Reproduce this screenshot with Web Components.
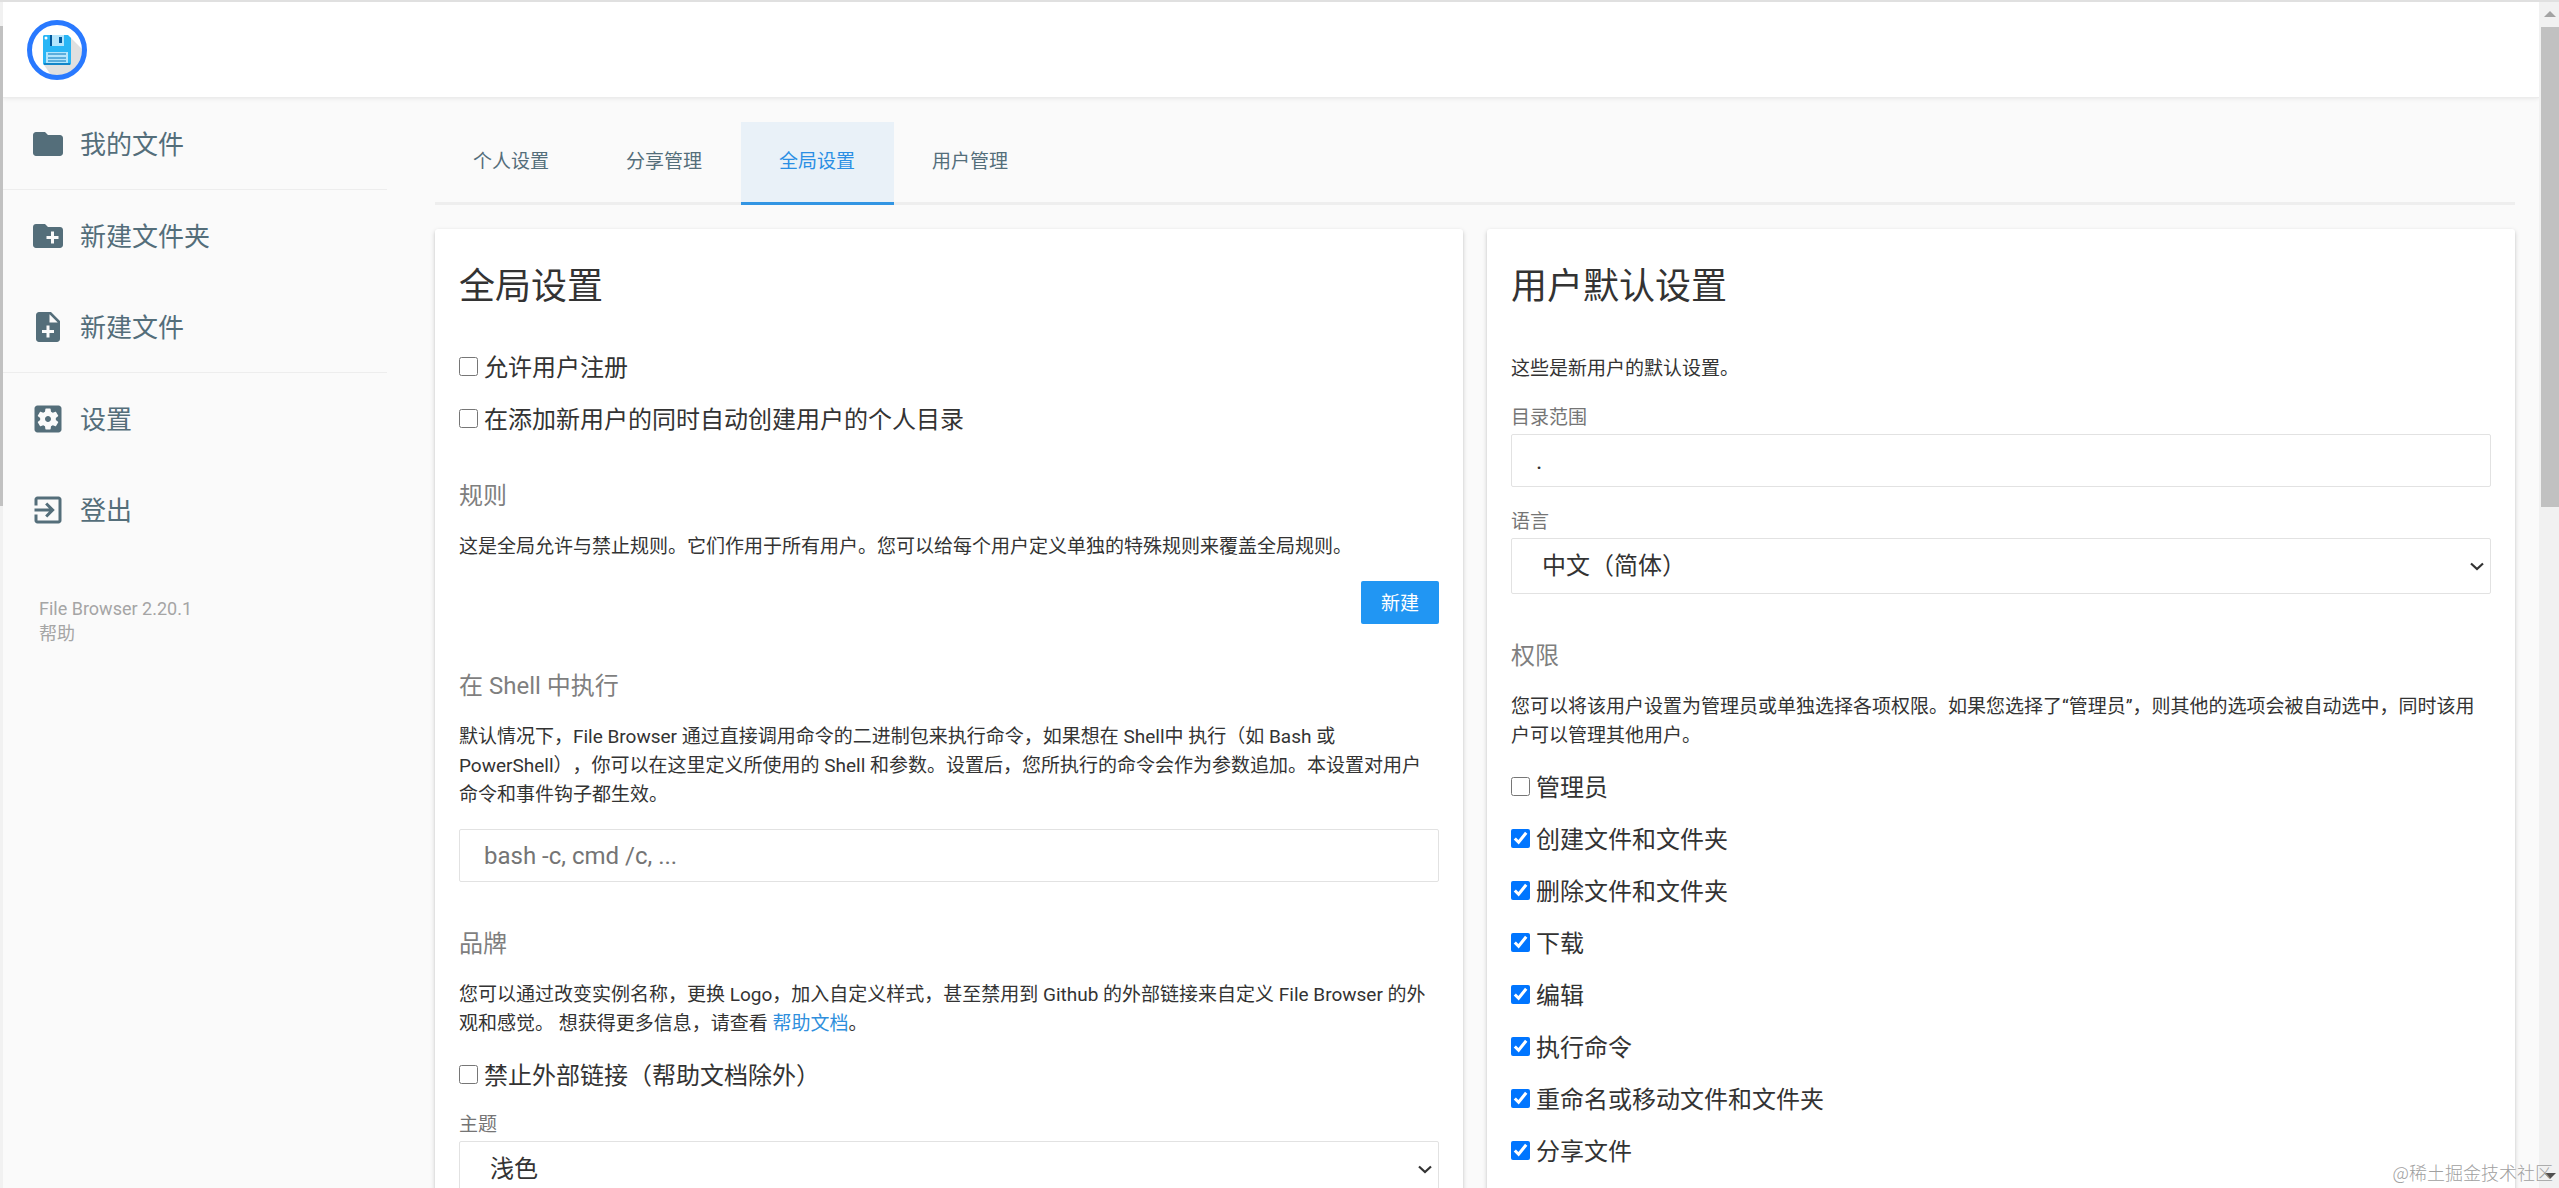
<!DOCTYPE html>
<html lang="zh-CN">
<head>
<meta charset="utf-8">
<title>全局设置 - File Browser</title>
<style>
html, body {
    height: 100%;
}

body {
    margin: 0;
    overflow: hidden;
    background: #fafafa;
    color: #333;
    font-family: Roboto, "Noto Sans CJK SC", sans-serif;
    font-size: 19px;
    text-spacing-trim: space-all;
}

settings-card p a {
    color: #2f8fdd;
    text-decoration: none;
}
</style>
</head>
<body>

<app-shell>
    <app-header slot="header"></app-header>

    <side-nav slot="nav">
        <nav-item icon="folder">我的文件</nav-item>
        <nav-item icon="create_new_folder" divided>新建文件夹</nav-item>
        <nav-item icon="note_add">新建文件</nav-item>
        <nav-item icon="settings" divided>设置</nav-item>
        <nav-item icon="logout">登出</nav-item>
        <span slot="credits">File Browser 2.20.1</span>
        <help-link slot="credits">帮助</help-link>
    </side-nav>

    <tab-bar>
        <tab-item>个人设置</tab-item>
        <tab-item>分享管理</tab-item>
        <tab-item active>全局设置</tab-item>
        <tab-item>用户管理</tab-item>
    </tab-bar>

    <card-row>
        <settings-card heading="全局设置">
            <check-row>允许用户注册</check-row>
            <check-row>在添加新用户的同时自动创建用户的个人目录</check-row>

            <h3>规则</h3>
            <p>这是全局允许与禁止规则。它们作用于所有用户。您可以给每个用户定义单独的特殊规则来覆盖全局规则。</p>
            <flat-button>新建</flat-button>

            <h3>在 Shell 中执行</h3>
            <p>默认情况下，File Browser 通过直接调用命令的二进制包来执行命令，如果想在 Shell中 执行（如 Bash 或 PowerShell），你可以在这里定义所使用的 Shell 和参数。设置后，您所执行的命令会作为参数追加。本设置对用户命令和事件钩子都生效。</p>
            <text-field placeholder="bash -c, cmd /c, ..."></text-field>

            <h3>品牌</h3>
            <p>您可以通过改变实例名称，更换 Logo，加入自定义样式，甚至禁用到 Github 的外部链接来自定义 File Browser 的外观和感觉。 想获得更多信息，请查看 <a href="#docs">帮助文档</a>。</p>
            <check-row>禁止外部链接（帮助文档除外）</check-row>
            <select-field label="主题" value="浅色"></select-field>
        </settings-card>

        <settings-card heading="用户默认设置">
            <p>这些是新用户的默认设置。</p>
            <text-field label="目录范围" value="."></text-field>
            <select-field label="语言" value="中文（简体）"></select-field>

            <h3>权限</h3>
            <p>您可以将该用户设置为管理员或单独选择各项权限。如果您选择了“管理员”，则其他的选项会被自动选中，同时该用户可以管理其他用户。</p>
            <check-row>管理员</check-row>
            <check-row checked>创建文件和文件夹</check-row>
            <check-row checked>删除文件和文件夹</check-row>
            <check-row checked>下载</check-row>
            <check-row checked>编辑</check-row>
            <check-row checked>执行命令</check-row>
            <check-row checked>重命名或移动文件和文件夹</check-row>
            <check-row checked>分享文件</check-row>
        </settings-card>
    </card-row>

    <page-mark slot="mark">@稀土掘金技术社区</page-mark>
</app-shell>

<script>
(function() {
    const icons = {
        folder: 'M10 4H4c-1.1 0-1.99.9-1.99 2L2 18c0 1.1.9 2 2 2h16c1.1 0 2-.9 2-2V8c0-1.1-.9-2-2-2h-8l-2-2z',
        create_new_folder: 'M20 6h-8l-2-2H4c-1.11 0-1.99.89-1.99 2L2 18c0 1.11.89 2 2 2h16c1.11 0 2-.89 2-2V8c0-1.11-.89-2-2-2zm-1 8h-3v3h-2v-3h-3v-2h3V9h2v3h3v2z',
        note_add: 'M14 2H6c-1.1 0-1.99.9-1.99 2L4 20c0 1.1.89 2 1.99 2H18c1.1 0 2-.9 2-2V8l-6-6zm2 14h-3v3h-2v-3H8v-2h3v-3h2v3h3v2zm-3-7V3.5L18.5 9H13z',
        settings: 'M12 10c-1.1 0-2 .9-2 2s.9 2 2 2 2-.9 2-2-.9-2-2-2zm7-7H5c-1.11 0-2 .9-2 2v14c0 1.1.89 2 2 2h14c1.11 0 2-.9 2-2V5c0-1.1-.89-2-2-2zm-1.75 9c0 .23-.02.46-.05.68l1.48 1.16c.13.11.17.3.08.45l-1.4 2.42c-.09.15-.27.21-.43.15l-1.74-.7c-.36.28-.76.51-1.18.69l-.26 1.85c-.03.17-.18.3-.35.3h-2.8c-.17 0-.32-.13-.35-.29l-.26-1.85c-.43-.18-.82-.41-1.18-.69l-1.74.7c-.16.06-.34 0-.43-.15l-1.4-2.42c-.09-.15-.05-.34.08-.45l1.48-1.16c-.03-.23-.05-.46-.05-.69 0-.23.02-.46.05-.68l-1.48-1.16c-.13-.11-.17-.3-.08-.45l1.4-2.42c.09-.15.27-.21.43-.15l1.74.7c.36-.28.76-.51 1.18-.69l.26-1.85c.03-.17.18-.3.35-.3h2.8c.17 0 .32.13.35.29l.26 1.85c.43.18.82.41 1.18.69l1.74-.7c.16-.06.34 0 .43.15l1.4 2.42c.09.15.05.34-.08.45l-1.48 1.16c.03.23.05.46.05.69z',
        logout: 'M10.09 15.59L11.5 17l5-5-5-5-1.41 1.41L12.67 11H3v2h9.67l-2.58 2.59zM19 3H5c-1.11 0-2 .9-2 2v4h2V5h14v14H5v-4H3v4c0 1.1.89 2 2 2h14c1.1 0 2-.9 2-2V5c0-1.1-.9-2-2-2z'
    };

    /**
     * Register an element whose shadow root is cloned from the given markup.
     *
     * @param name
     * @param html
     * @param setup called with the element once it is connected
     */
    function define(name, html, setup) {
        const template = document.createElement('template');
        template.innerHTML = html;

        customElements.define(name, class extends HTMLElement {
            constructor() {
                super();
                this.attachShadow({mode: 'open'});
                this.shadowRoot.appendChild(template.content.cloneNode(true));
            }

            connectedCallback() {
                if (setup) {
                    setup(this, this.shadowRoot);
                }
            }
        });
    }

    /*
     *     Page frame
     * ------------------
     */
    define('app-shell', `
<style>
:host {
    display: grid;
    grid-template-columns: 3px minmax(0, 1fr) 20px;
    height: 100vh;
    box-sizing: border-box;
    border-top: 2px solid #e0e0e0;
    overflow: hidden;
}
.rail {
    background: #f1f1f1;
    display: flex;
    flex-direction: column;
}
.left {
    padding-top: 24px;
}
.right {
    padding: 9px 0 9px 2px;
    align-items: center;
    justify-content: space-between;
}
.right .thumb {
    margin: 10px 0 auto;
}
.thumb {
    width: 100%;
    height: 480px;
    background: #c1c1c1;
}
.rail svg {
    width: 12px;
    height: 6px;
    flex: none;
}
.page {
    min-width: 0;
    overflow: hidden;
}
.body {
    display: grid;
    grid-template-columns: 384px minmax(0, 1fr);
    column-gap: 48px;
    padding-right: 24px;
}
</style>
<div class="rail left"><div class="thumb"></div></div>
<div class="page">
    <slot name="header"></slot>
    <div class="body">
        <slot name="nav"></slot>
        <main><slot></slot></main>
    </div>
</div>
<div class="rail right">
    <svg viewBox="0 0 12 6"><path d="M0 6l6-6 6 6z" fill="#a3a3a3"/></svg>
    <div class="thumb"></div>
    <svg viewBox="0 0 12 6"><path d="M0 0l6 6 6-6z" fill="#505050"/></svg>
</div>
<slot name="mark"></slot>
`);

    define('app-header', `
<style>
:host {
    display: flex;
    align-items: center;
    position: relative;
    height: 95px;
    padding: 0 24px;
    background: #fff;
    border-bottom: 1px solid rgba(0, 0, 0, .075);
    box-shadow: 0 0 5px rgba(0, 0, 0, .1);
}
svg {
    width: 60px;
    height: 60px;
}
</style>
<svg viewBox="0 0 60 60" role="img" aria-label="File Browser">
    <circle cx="30" cy="30" r="27.5" fill="#fff"/>
    <path d="M43 17l13 13a26 26 0 0 1-32 25l-7-10z" fill="#e0e0e0"/>
    <circle cx="30" cy="30" r="27.5" fill="none" stroke="#2979ff" stroke-width="5"/>
    <path d="M17 15h24l3 3v26l-1 1H17l-1-1V16z" fill="#29b6f6"/>
    <path d="M25 15h12v11H25z" fill="#b3e5fc"/>
    <path d="M23 15h2v11h-2zM32 17h3v6h-3z" fill="#01579b"/>
    <circle cx="19" cy="18" r="1.5" fill="#fff"/>
    <path d="M19 32h22v11H19z" fill="#b3e5fc"/>
    <path d="M21 34h18M21 38h18M21 41h18" stroke="#0277bd"/>
    <path d="M17 44h26" stroke="#01579b"/>
</svg>
`);

    define('page-mark', `
<style>
:host {
    position: absolute;
    right: 6px;
    bottom: 4px;
    font: 300 18px/24px "Noto Sans CJK SC", sans-serif;
    color: #a0a0a0;
}
</style>
<slot></slot>
`);

    /*
     *     Sidebar
     * ---------------
     */
    define('side-nav', `
<style>
:host {
    display: block;
}
.credits {
    display: flex;
    flex-direction: column;
    align-items: flex-start;
    padding: 41px 36px;
    font-size: 18px;
    line-height: 25px;
    color: #a5a5a5;
}
</style>
<nav><slot></slot></nav>
<div class="credits"><slot name="credits"></slot></div>
`);

    define('nav-item', `
<style>
:host {
    display: block;
}
:host([divided]) {
    border-top: 1px solid #ededed;
}
button {
    display: flex;
    align-items: center;
    gap: 14px;
    width: 100%;
    height: 91px;
    padding: 0 27px;
    border: 0;
    background: none;
    color: #546e7a;
    font: inherit;
    font-size: 26px;
    cursor: pointer;
}
svg {
    width: 36px;
    height: 36px;
    fill: currentColor;
}
span {
    padding-bottom: 3px;
}
</style>
<button type="button">
    <svg viewBox="0 0 24 24" aria-hidden="true"><path/></svg>
    <span><slot></slot></span>
</button>
`, (el, root) => {
        root.querySelector('path').setAttribute('d', icons[el.getAttribute('icon')]);
    });

    define('help-link', `
<style>
a {
    color: inherit;
    text-decoration: none;
}
</style>
<a href="#help"><slot></slot></a>
`);

    /*
     *     Tabs
     * ------------
     */
    define('tab-bar', `
<style>
:host {
    display: flex;
    margin-top: 24px;
    box-shadow: inset 0 -3px #eee;
}
</style>
<slot></slot>
`);

    define('tab-item', `
<style>
:host {
    display: block;
}
a {
    display: block;
    padding: 0 39px 0 38px;
    border-bottom: 3px solid transparent;
    color: #546e7a;
    line-height: 80px;
    text-decoration: none;
}
:host([active]) a {
    color: #2b8fe4;
    background: #e9f1f8;
    border-color: #3295e3;
}
</style>
<a href="#settings"><slot></slot></a>
`);

    /*
     *     Cards
     * -------------
     */
    define('card-row', `
<style>
:host {
    display: grid;
    grid-template-columns: repeat(2, minmax(0, 1fr));
    gap: 24px;
    margin-top: 24px;
}
</style>
<slot></slot>
`);

    define('settings-card', `
<style>
:host {
    display: block;
    padding: 37px 24px 24px;
    border-radius: 3px;
    background: #fff;
    box-shadow: 0 2px 5px rgba(0, 0, 0, .18), 0 1px 2px rgba(0, 0, 0, .08);
}
h2 {
    margin: 0 0 46px;
    font-size: 36px;
    font-weight: 400;
    line-height: 42px;
}
::slotted(h3) {
    margin: 48px 0 0;
    color: #7f7f7f;
    font-size: 24px;
    font-weight: 400;
    line-height: 28px;
}
::slotted(p) {
    margin: 22px 0 0;
    line-height: 29px;
}
::slotted(:first-child) {
    margin-top: 0;
}
</style>
<h2></h2>
<slot></slot>
`, (el, root) => {
        root.querySelector('h2').textContent = el.getAttribute('heading');
    });

    /*
     *     Form controls
     * ---------------------
     */
    define('check-row', `
<style>
:host {
    display: block;
    margin-top: 24px;
}
label {
    display: flex;
    align-items: center;
    gap: 6px;
    height: 28px;
    font-size: 24px;
    line-height: 28px;
}
input {
    width: 19px;
    height: 19px;
    margin: 0 0 4px;
}
</style>
<label><input type="checkbox"><span><slot></slot></span></label>
`, (el, root) => {
        root.querySelector('input').checked = el.hasAttribute('checked');
    });

    define('flat-button', `
<style>
:host {
    display: flex;
    justify-content: flex-end;
    margin-top: 20px;
}
button {
    height: 43px;
    padding: 0 20px 3px;
    border: 0;
    border-radius: 2px;
    background: #2196f3;
    color: #fff;
    font: inherit;
}
</style>
<button type="button"><slot></slot></button>
`);

    const fieldStyle = `
:host {
    display: block;
    margin-top: 23px;
}
label {
    display: block;
    margin-bottom: 4px;
    color: #757575;
    line-height: 24px;
}
input, select {
    display: block;
    width: 100%;
    box-sizing: border-box;
    border: 1px solid #e2e2e2;
    border-radius: 2px;
    background: #fff;
    color: #333;
    font: inherit;
    font-size: 24px;
}
`;

    define('text-field', `
<style>
${fieldStyle}
:host(:not([label])) {
    margin-top: 20px;
}
:host(:not([label])) label {
    display: none;
}
input {
    height: 53px;
    padding: 0 24px;
}
input::placeholder {
    color: #757575;
}
</style>
<label for="field"></label>
<input id="field" type="text">
`, (el, root) => {
        const input = root.querySelector('input');
        root.querySelector('label').textContent = el.getAttribute('label') || '';
        input.value = el.getAttribute('value') || '';
        input.placeholder = el.getAttribute('placeholder') || '';
    });

    define('select-field', `
<style>
${fieldStyle}
.box {
    position: relative;
}
select {
    height: 56px;
    padding: 0 30px;
    appearance: none;
}
svg {
    position: absolute;
    top: 24px;
    right: 7px;
    width: 14px;
    height: 9px;
    pointer-events: none;
}
</style>
<label for="field"></label>
<div class="box">
    <select id="field"><option></option></select>
    <svg viewBox="0 0 14 9" aria-hidden="true"><path d="M1 1.5l6 5.5 6-5.5" fill="none" stroke="#333" stroke-width="2.2"/></svg>
</div>
`, (el, root) => {
        root.querySelector('label').textContent = el.getAttribute('label');
        root.querySelector('option').textContent = el.getAttribute('value');
    });
})();
</script>
</body>
</html>
